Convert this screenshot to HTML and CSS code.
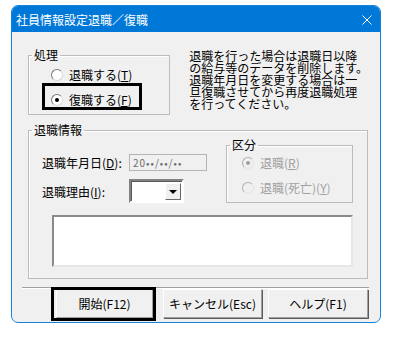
FILE: index.html
```html
<!DOCTYPE html>
<html>
<head>
  <meta charset="utf-8">
  <title>社員情報設定退職／復職</title>
  <link rel="stylesheet" href="styles.css">
</head>
<body>
  <!-- Dialog -->
  <div class="dialog">
    <div class="titlebar">
      <span class="title">社員情報設定退職／復職</span>
      <svg class="close" width="10" height="10" viewBox="0 0 10 10">
        <path d="M0.5 0.5 L9.5 9.5 M9.5 0.5 L0.5 9.5" stroke="#fff" stroke-width="1" fill="none"/>
      </svg>
    </div>

    <div class="main">
      <div class="top-row">
        <!-- 処理 -->
        <fieldset class="group mode">
          <legend>処理</legend>
          <div class="radio">
            <span class="radio-mark"></span>
            <span>退職する(<u>T</u>)</span>
          </div>
          <div class="radio marked-row">
            <span class="radio-mark on"></span>
            <span>復職する(<u>F</u>)</span>
          </div>
        </fieldset>
        <p class="note">退職を行った場合は退職日以降<br>の給与等のデータを削除します。<br>退職年月日を変更する場合は一<br>旦復職させてから再度退職処理<br>を行ってください。</p>
      </div>

      <!-- 退職情報 -->
      <fieldset class="group info">
        <legend>退職情報</legend>
        <div class="info-row">
          <div class="fields">
            <div class="field-row">
              <label class="field-label">退職年月日(<u>D</u>):</label>
              <div class="date-box">20••/••/••</div>
            </div>
            <div class="field-row combo-row">
              <label class="field-label">退職理由(<u>I</u>):</label>
              <div class="combo">
                <span class="combo-btn"><span class="arrow"></span></span>
              </div>
            </div>
          </div>
          <fieldset class="group kind">
            <legend>区分</legend>
            <div class="radio disabled">
              <span class="radio-mark on"></span>
              <span>退職(<u>R</u>)</span>
            </div>
            <div class="radio disabled">
              <span class="radio-mark"></span>
              <span>退職(死亡)(<u>Y</u>)</span>
            </div>
          </fieldset>
        </div>
        <div class="memo"></div>
      </fieldset>
    </div>

    <!-- Buttons -->
    <div class="footer">
      <button class="btn start marked-btn">開始(F12)</button>
      <button class="btn cancel">キャンセル(Esc)</button>
      <button class="btn help">ヘルプ(F1)</button>
    </div>
  </div>
</body>
</html>
```

FILE: styles.css
```css
body {
  margin: 0;
  background-color: #ffffff;
  color: #000000;
  font-family: "Noto Sans CJK JP", "Liberation Sans", sans-serif;
  font-size: 12px;
}
u {
  text-decoration: underline;
  text-underline-offset: 1px;
}
.dialog {
  width: 370px;
  height: 318px;
  margin: 5px 0 0 11px;
  box-sizing: border-box;
  border: 1px solid #1883d7;
  border-radius: 7px;
  background-color: #f0f0f0;
  display: flex;
  flex-direction: column;
}
.titlebar {
  height: 26px;
  background-color: #0078d7;
  color: #ffffff;
  border-radius: 6px 6px 0 0;
  display: flex;
  align-items: center;
  justify-content: space-between;
  padding: 1px 8px 0 4px;
  box-sizing: border-box;
}
.title {
  line-height: 14px;
}
.main {
  padding: 16px 12px 0 16px;
}
.top-row {
  display: flex;
  align-items: flex-start;
}
.group {
  margin: 0;
  padding: 0;
  min-width: 0;
  border: 1px solid #bcbcbc;
  box-shadow: inset 1px 1px 0 #ffffff;
}
.group legend {
  margin-left: 3px;
  padding: 0 2px;
  line-height: 14px;
}
.mode {
  width: 145px;
  box-sizing: border-box;
  padding: 4px 0 5px 21px;
}
.mode legend {
  margin-left: -18px;
}
.radio {
  display: flex;
  align-items: center;
  gap: 6px;
  height: 18px;
  line-height: 14px;
  white-space: nowrap;
}
.radio + .radio {
  margin-top: 7px;
}
.radio-mark {
  width: 12px;
  height: 12px;
  margin-left: 1px;
  box-sizing: border-box;
  border-radius: 50%;
  border: 1px solid;
  border-color: #7a7a7a #d8d8d8 #d8d8d8 #7a7a7a;
  background-color: #ffffff;
  position: relative;
  flex-shrink: 0;
}
.radio-mark.on::after {
  content: "";
  position: absolute;
  left: 3px;
  top: 3px;
  width: 4px;
  height: 4px;
  border-radius: 50%;
  background-color: #000000;
}
.radio.disabled {
  color: #a0a0a0;
}
.radio.disabled .radio-mark {
  background-color: #f0f0f0;
  border-color: #b0b0b0 #e4e4e4 #e4e4e4 #b0b0b0;
}
.radio.disabled .radio-mark.on::after {
  background-color: #a0a0a0;
}
/* black frames drawn over the screenshot */
.marked-row,
.marked-btn {
  position: relative;
}
.marked-row::after {
  content: "";
  position: absolute;
  left: -8px;
  top: -8px;
  bottom: -1px;
  width: 100px;
  box-sizing: border-box;
  border: 3px solid #000000;
}
.marked-btn::after {
  content: "";
  position: absolute;
  left: -6px;
  right: -4px;
  top: -3px;
  bottom: -4px;
  border: 3px solid #000000;
}
.note {
  margin: 2px 0 0 19px;
  line-height: 12px;
  white-space: nowrap;
}
.info {
  margin-top: 8px;
  padding: 0 0 11px 0;
}
.info-row {
  display: flex;
  margin-top: 1px;
  padding-left: 13px;
}
.fields {
  width: 165px;
  padding-top: 15px;
}
.field-row {
  display: flex;
  align-items: center;
  height: 18px;
}
.combo-row {
  height: 24px;
  margin-top: 8px;
}
.field-label {
  width: 87px;
  white-space: nowrap;
}
.date-box {
  width: 78px;
  height: 17px;
  box-sizing: border-box;
  border: 1px solid #b4b4b4;
  background-color: #f0f0f0;
  color: #6d6d6d;
  font-size: 10px;
  line-height: 15px;
  padding-left: 3px;
  letter-spacing: 1px;
}
.combo {
  width: 55px;
  height: 24px;
  box-sizing: border-box;
  border: 2px solid;
  border-color: #828282 #ffffff #ffffff #828282;
  box-shadow: inset 1px 1px 0 #5a5a5a;
  background-color: #ffffff;
  display: flex;
  justify-content: flex-end;
  padding: 2px 1px 1px 0;
}
.combo-btn {
  width: 16px;
  box-sizing: border-box;
  border: 1px solid;
  border-color: #ffffff #696969 #696969 #ffffff;
  background-color: #f0f0f0;
  display: flex;
  align-items: center;
  justify-content: center;
}
.arrow {
  width: 0;
  height: 0;
  border-left: 4px solid transparent;
  border-right: 4px solid transparent;
  border-top: 4px solid #000000;
}
.kind {
  width: 127px;
  box-sizing: border-box;
  margin-left: 19px;
  padding: 2px 0 5px 14px;
}
.kind legend {
  margin-left: -11px;
}
.memo {
  width: 301px;
  height: 52px;
  box-sizing: border-box;
  margin: 12px 0 0 23px;
  border: 2px solid;
  border-color: #8a8a8a #e6e6e6 #e6e6e6 #8a8a8a;
  background-color: #ffffff;
}
.footer {
  margin: 8px 11px 0 10px;
  border-top: 1px solid #a0a0a0;
  box-shadow: inset 0 1px 0 #ffffff;
  padding: 1px 0 0 34px;
  display: flex;
}
.btn {
  height: 29px;
  box-sizing: border-box;
  border: 1px solid;
  border-color: #ffffff #a0a0a0 #a0a0a0 #ffffff;
  box-shadow: 1px 1px 0 #5a5a5a;
  background-color: #f0f0f0;
  font-family: inherit;
  font-size: 12px;
  color: #000000;
  padding: 0;
}
.start {
  width: 97px;
  margin-right: 10px;
}
.cancel {
  width: 99px;
  margin-right: 6px;
}
.help {
  width: 100px;
}
```
